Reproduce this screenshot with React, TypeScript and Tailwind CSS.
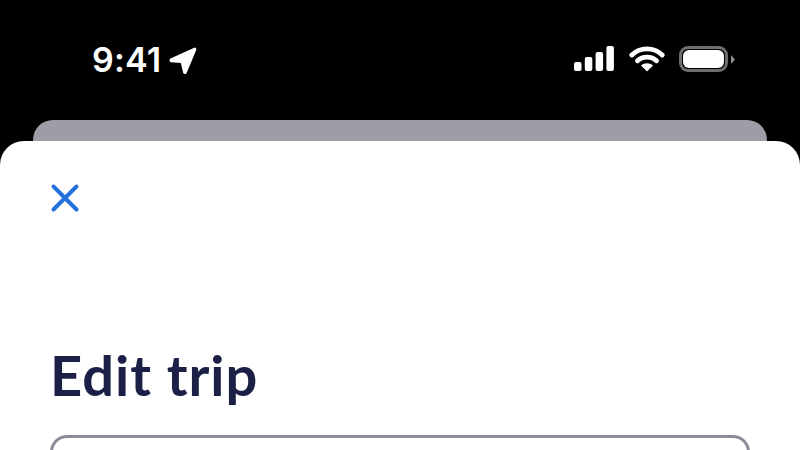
import React from "react";

function StatusBar() {
  return (
    <div className="flex h-[120px] items-start justify-between pl-[92px] pr-[65px] pt-[41px]">
      <div className="flex items-center gap-[8px]">
        <span className="font-['Inter',sans-serif] text-[34px] font-semibold leading-[38px] tracking-[0.2px] text-white">
          9:41
        </span>
        <svg width="28" height="28" viewBox="0 0 28 28" className="mt-[1px]">
          <path
            d="M25.6 1.6 L1.8 12.4 Q0.8 13.6 2 14.4 L12.6 15.2 L15 25.6 Q15.8 26.8 16.8 25.6 L26.4 2.6 Q26.6 1 25.6 1.6 Z"
            fill="white"
            stroke="white"
            strokeWidth="1.8"
            strokeLinejoin="round"
          />
        </svg>
      </div>
      <div className="mt-[5px] flex items-center">
        <svg width="40" height="26" viewBox="0 0 40 26" className="mr-[15px]">
          <rect x="0" y="16" width="7.5" height="9" rx="2" fill="white" />
          <rect x="10.8" y="11" width="7.5" height="14" rx="2" fill="white" />
          <rect x="21.6" y="6" width="7.5" height="19" rx="2" fill="white" />
          <rect x="32.4" y="0" width="7.5" height="25" rx="2" fill="white" />
        </svg>
        <svg width="36" height="26" viewBox="0 0 36 26" className="mr-[14px]">
          <path d="M2.8 9 C11 0.8 25 0.8 33.2 9" fill="none" stroke="white" strokeWidth="4.8" strokeLinecap="round" />
          <path d="M8.5 14.8 C13.5 9.8 22.5 9.8 27.5 14.8" fill="none" stroke="white" strokeWidth="4.8" strokeLinecap="round" />
          <path d="M12 19.5 L18 25.5 L24 19.5 C20.5 16.5 15.5 16.5 12 19.5 Z" fill="white" />
        </svg>
        <div className="flex items-center">
          <div className="flex h-[26px] w-[49px] items-center justify-center rounded-[9px] border-[3px] border-[#6e6e6e]">
            <div className="h-[18px] w-[41px] rounded-[6px] bg-white" />
          </div>
          <svg width="4" height="9" viewBox="0 0 4 9" className="ml-[3px]">
            <path d="M0 0 L4 4.5 L0 9 Z" fill="#8f8f8f" />
          </svg>
        </div>
      </div>
    </div>
  );
}

export default function App() {
  return (
    <div className="h-[450px] w-[800px] overflow-hidden bg-black">
      <StatusBar />
      <div className="mx-[33px] h-[41px] rounded-t-[20px] bg-[#9d9da5]" />
      <div className="-mt-[20px] h-[310px] rounded-t-[24px] bg-white px-[50px] pt-[42px]">
        <svg width="30" height="30" viewBox="0 0 30 30" className="block">
          <path d="M3.5 3.5 L26.5 26.5 M26.5 3.5 L3.5 26.5" stroke="#2470dc" strokeWidth="4" strokeLinecap="round" fill="none" />
        </svg>
        <h1 className="mt-[131px] font-['Lato',sans-serif] text-[56px] font-bold leading-[62px] tracking-[1px] text-[#1c2046]">
          Edit trip
        </h1>
        <div className="mt-[29px] h-[60px] rounded-[17px] border-[3px] border-[#8b8c9a]" />
      </div>
    </div>
  );
}
